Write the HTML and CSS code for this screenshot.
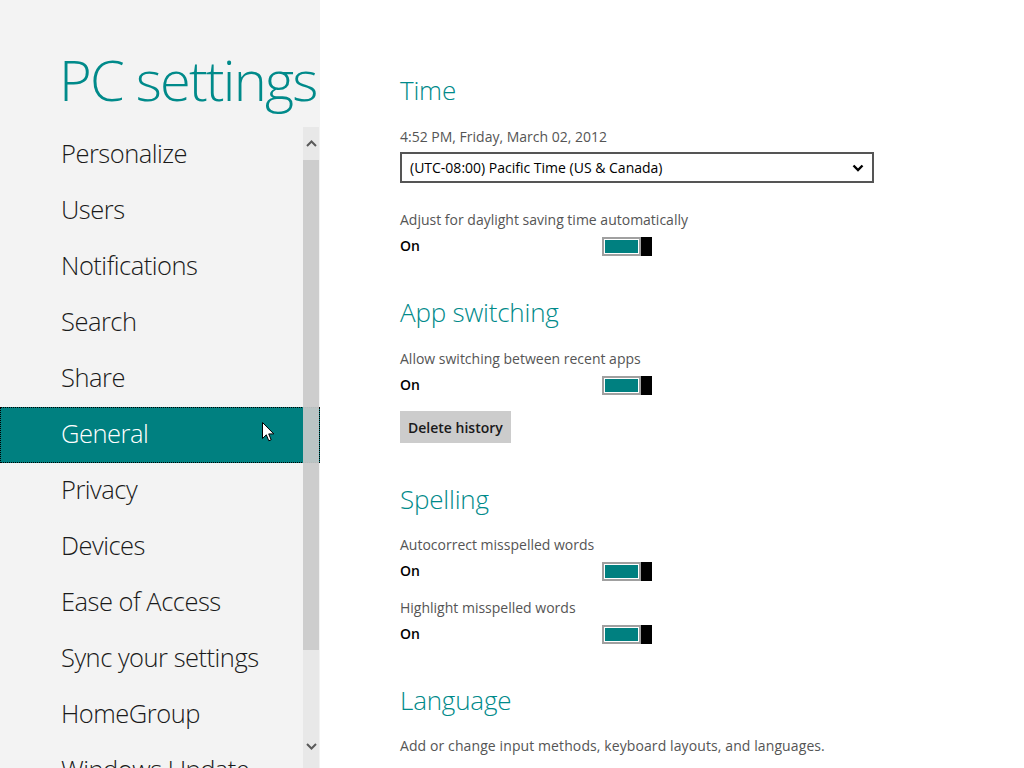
FILE: index.html
```html
<!DOCTYPE html>
<html>
<head>
<meta charset="utf-8">
<link rel="stylesheet" href="styles.css">
</head>
<body>
<div class="app">
  <aside class="side">
    <h1 class="title">PC settings</h1>
    <div class="navwrap">
      <ul class="nav">
        <li class="item">Personalize</li>
        <li class="item">Users</li>
        <li class="item">Notifications</li>
        <li class="item">Search</li>
        <li class="item">Share</li>
        <li class="item active">General</li>
        <li class="item">Privacy</li>
        <li class="item">Devices</li>
        <li class="item">Ease of Access</li>
        <li class="item">Sync your settings</li>
        <li class="item">HomeGroup</li>
        <li class="item">Windows Update</li>
      </ul>
      <div class="scrollbar">
        <div class="sb-btn">
          <svg width="11" height="7" viewBox="0 0 11 7"><polyline points="1,6 5.5,1.5 10,6" fill="none" stroke="#5a5a5a" stroke-width="2"/></svg>
        </div>
        <div class="sb-thumb"></div>
        <div class="sb-rest">
          <svg width="11" height="7" viewBox="0 0 11 7"><polyline points="1,1 5.5,5.5 10,1" fill="none" stroke="#5a5a5a" stroke-width="2"/></svg>
        </div>
      </div>
      <svg class="cursor" width="13" height="21" viewBox="0 0 13 21"><path d="M0.5 0.5 L0.5 16.5 L4.3 12.8 L6.8 18.8 L9.2 17.8 L6.7 11.9 L11.8 11.9 Z" fill="#fff" stroke="#000" stroke-width="1" stroke-linejoin="miter"/></svg>
    </div>
  </aside>
  <main class="main">
    <section class="sec">
      <h2 class="heading">Time</h2>
      <div class="label">4:52 PM, Friday, March 02, 2012</div>
      <div class="select">
        <span>(UTC-08:00) Pacific Time (US &amp; Canada)</span>
        <svg width="12" height="8" viewBox="0 0 12 8"><polyline points="1.5,1.5 6,6 10.5,1.5" fill="none" stroke="#000" stroke-width="2.4"/></svg>
      </div>
      <div class="label gap-lg">Adjust for daylight saving time automatically</div>
      <div class="row"><span class="state">On</span><span class="toggle"><span class="fill"></span><span class="knob"></span></span></div>
    </section>
    <section class="sec">
      <h2 class="heading">App switching</h2>
      <div class="label">Allow switching between recent apps</div>
      <div class="row"><span class="state">On</span><span class="toggle"><span class="fill"></span><span class="knob"></span></span></div>
      <button class="btn">Delete history</button>
    </section>
    <section class="sec">
      <h2 class="heading tight">Spelling</h2>
      <div class="label">Autocorrect misspelled words</div>
      <div class="row"><span class="state">On</span><span class="toggle"><span class="fill"></span><span class="knob"></span></span></div>
      <div class="label gap-md">Highlight misspelled words</div>
      <div class="row"><span class="state">On</span><span class="toggle"><span class="fill"></span><span class="knob"></span></span></div>
    </section>
    <section class="sec">
      <h2 class="heading">Language</h2>
      <div class="label lang">Add or change input methods, keyboard layouts, and languages.</div>
    </section>
  </main>
</div>
</body>
</html>
```

FILE: styles.css
```css
* { box-sizing: border-box; }
html, body { margin: 0; padding: 0; height: 100%; overflow: hidden; }
body {
  font-family: "Open Sans", "Segoe UI", sans-serif;
  background: #fff;
  color: #000;
}
.app { display: flex; height: 768px; }
.side {
  width: 320px;
  flex: 0 0 320px;
  background: #f3f3f3;
  display: flex;
  flex-direction: column;
  overflow: hidden;
}
.title {
  margin: 0;
  padding: 44px 0 0 59px;
  height: 127px;
  font-weight: 300;
  font-size: 56px;
  line-height: 70px;
  color: #008a8a;
  white-space: nowrap;
  letter-spacing: -1.8px;
}
.navwrap { position: relative; flex: 1; overflow: hidden; }
.nav { list-style: none; margin: 0; padding: 0; }
.item {
  height: 56px;
  line-height: 51px;
  padding-left: 60px;
  font-size: 25.5px;
  font-weight: 300;
  color: #1a1a1a;
  white-space: nowrap;
  border: 1px solid transparent;
  letter-spacing: -0.5px;
}
.item.active {
  background: #008080;
  color: #fff;
  border: 1px dotted #000;
}
.scrollbar {
  position: absolute;
  top: 0;
  right: 1px;
  width: 16px;
  bottom: 0;
  display: flex;
  flex-direction: column;
}
.sb-btn {
  height: 33px;
  background: #e8e8e8;
  display: flex;
  align-items: center;
  justify-content: center;
}
.sb-thumb {
  height: 490px;
  background: rgba(202, 202, 202, 0.92);
}
.sb-rest {
  flex: 1;
  background: #e8e8e8;
  display: flex;
  align-items: flex-start;
  justify-content: center;
  padding-top: 93px;
}
.cursor { position: absolute; left: 262px; top: 295px; }

.main { flex: 1; padding: 74px 0 0 80px; }
.sec { margin-bottom: 40px; }
.heading {
  margin: 0 0 21px 0;
  font-size: 26px;
  font-weight: 300;
  line-height: 32px;
  color: #008a8a;
  letter-spacing: -0.2px;
}
.heading.tight { margin-bottom: 20px; }
.label {
  font-size: 14px;
  line-height: 20px;
  color: #555;
  white-space: nowrap;
}
.lang { margin-top: -1px; letter-spacing: 0.1px; }
.gap-lg { margin-top: 27px; }
.gap-md { margin-top: 17px; }
.select {
  margin-top: 5px;
  width: 474px;
  height: 31px;
  border: 2px solid #555;
  display: flex;
  align-items: center;
  justify-content: space-between;
  padding: 0 8px 0 8px;
  font-size: 14px;
  color: #000;
}
.row {
  margin-top: 6px;
  display: grid;
  grid-template-columns: 202px auto;
  align-items: center;
  height: 20px;
}
.state { font-size: 14px; font-weight: 600; line-height: 20px; }
.toggle {
  display: flex;
  width: 50px;
  height: 19px;
}
.fill {
  width: 39px;
  height: 19px;
  border: 2px solid #a0a0a0;
  background: #008080;
  box-shadow: inset 0 0 0 1px #fff;
}
.knob { width: 11px; height: 19px; background: #000; }
.btn {
  margin-top: 16px;
  display: block;
  height: 32px;
  padding: 0 8px;
  border: 0;
  background: #cccccc;
  font-family: "Open Sans", sans-serif;
  font-size: 14px;
  font-weight: 600;
  color: #1a1a1a;
}
```
